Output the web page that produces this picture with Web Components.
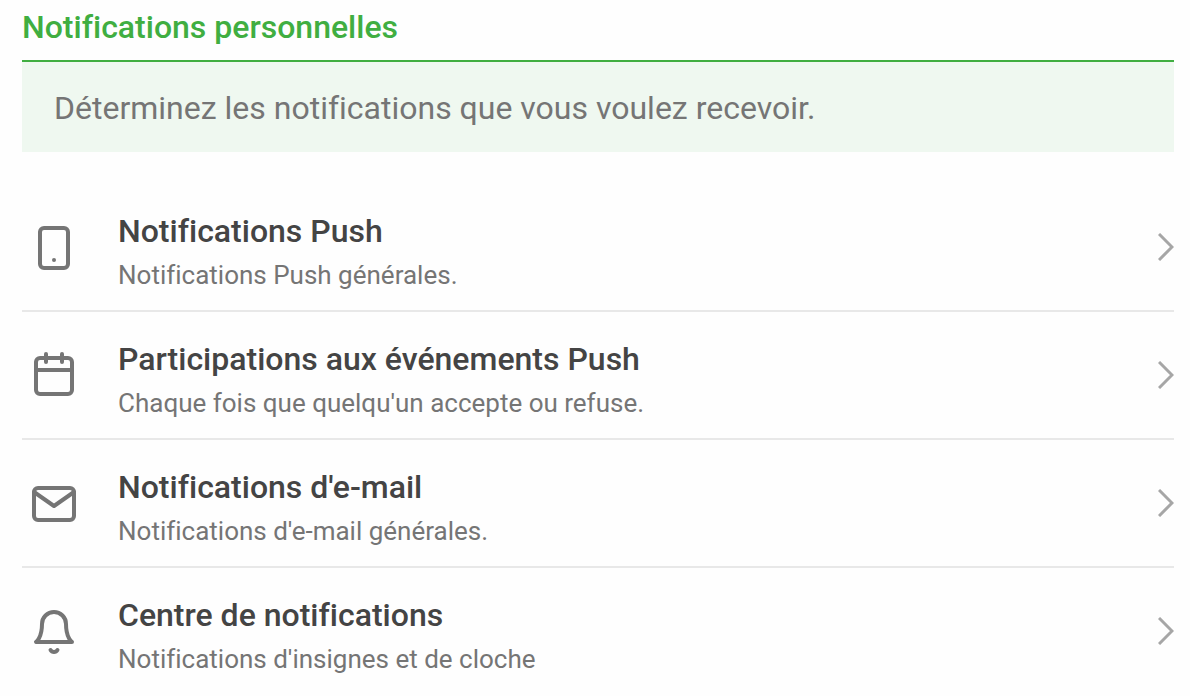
<!DOCTYPE html>
<html lang="fr">
<head>
<meta charset="utf-8">
<meta name="viewport" content="width=device-width, initial-scale=1">
<title>Notifications personnelles</title>
<style>
    body {
        margin: 0;
        background-color: #FEFEFE;
        color: #757575;
        font-family: Roboto, "Open Sans", sans-serif;
        font-variant-ligatures: none;
    }
</style>
</head>
<body>
<settings-section>
    <span slot="heading">Notifications personnelles</span>
    <span slot="intro">Déterminez les notifications que vous voulez recevoir.</span>
    <setting-row icon="phone" href="#push">
        <span slot="title">Notifications Push</span>
        <span slot="detail">Notifications Push générales.</span>
    </setting-row>
    <setting-row icon="calendar" href="#participations">
        <span slot="title">Participations aux événements Push</span>
        <span slot="detail">Chaque fois que quelqu'un accepte ou refuse.</span>
    </setting-row>
    <setting-row icon="mail" href="#email">
        <span slot="title">Notifications d'e-mail</span>
        <span slot="detail">Notifications d'e-mail générales.</span>
    </setting-row>
    <setting-row icon="bell" href="#centre">
        <span slot="title">Centre de notifications</span>
        <span slot="detail">Notifications d'insignes et de cloche</span>
    </setting-row>
</settings-section>

<script>
const ICONS = {
    phone: `<rect x="5" y="2" width="14" height="20" rx="2"/><path d="M12 18h.01"/>`,
    calendar: `<rect x="3" y="3" width="18" height="18" rx="2"/><path d="M16 1v4M8 1v4M3 9h18"/>`,
    mail: `<rect x="2" y="4" width="20" height="16" rx="2"/><path d="M22 6l-10 7L2 6"/>`,
    bell: `<path d="M18 8A6 6 0 0 0 6 8c0 7-3 9-3 9h18s-3-2-3-9"/><path d="M13.73 21a2 2 0 0 1-3.46 0"/>`
};

const iconTemplate = document.createElement("template");
iconTemplate.innerHTML = `
    <style>
        :host {
            display: block;
            flex: none;
        }

        svg {
            display: block;
            width: 48px;
            height: 48px;

            fill: none;
            stroke: currentColor;
            stroke-width: 2;
            stroke-linecap: round;
            stroke-linejoin: round;
        }
    </style>
    <svg id="i_svg" viewBox="0 0 24 24" aria-hidden="true"></svg>
`;

class LineIcon extends HTMLElement {
    static observedAttributes = ["name"];

    constructor() {
        super();
        this.attachShadow({mode: "open"});
        this.shadowRoot.append(iconTemplate.content.cloneNode(true));
        this.svg = this.shadowRoot.getElementById("i_svg");
    }

    attributeChangedCallback(_attribute, _oldValue, newValue) {
        this.svg.innerHTML = ICONS[newValue] || "";
    }
}

const rowTemplate = document.createElement("template");
rowTemplate.innerHTML = `
    <style>
        :host {
            display: block;
            border-bottom: 2px solid #E8E8E8;
        }

        :host(:last-of-type) {
            border-bottom-color: transparent;
        }

        .row {
            display: flex;
            align-items: center;
            gap: 40px;
            padding-left: 8px;

            color: inherit;
            text-decoration: none;
        }

        .row:hover {
            background-color: #F7FBF7;
        }

        .icon {
            padding-top: 2px;
        }

        .text {
            flex: 1;
            min-width: 0;
            padding: 25px 0 13px;
        }

        .title,
        .detail {
            display: block;
            line-height: 44px;
        }

        .title {
            color: #444444;
            font-size: 32px;
            font-weight: 500;
        }

        .detail {
            font-size: 26px;
        }

        .chevron {
            flex: none;
            width: 16px;
            height: 28px;

            fill: none;
            stroke: #A6A6A6;
            stroke-width: 3;
        }
    </style>
    <a id="r_link" class="row">
        <line-icon id="r_icon" class="icon"></line-icon>
        <span class="text">
            <span class="title"><slot name="title"></slot></span>
            <span class="detail"><slot name="detail"></slot></span>
        </span>
        <svg class="chevron" viewBox="0 0 16 28" aria-hidden="true"><path d="M1 1l13 13L1 27"/></svg>
    </a>
`;

class SettingRow extends HTMLElement {
    static observedAttributes = ["icon", "href"];

    constructor() {
        super();
        this.attachShadow({mode: "open"});
        this.shadowRoot.append(rowTemplate.content.cloneNode(true));
        this.link = this.shadowRoot.getElementById("r_link");
        this.icon = this.shadowRoot.getElementById("r_icon");
    }

    attributeChangedCallback(attribute, _oldValue, newValue) {
        switch(attribute) {
            case "icon":
                this.icon.setAttribute("name", newValue);
                break;
            case "href":
                this.link.setAttribute("href", newValue);
                break;
        }
    }
}

const sectionTemplate = document.createElement("template");
sectionTemplate.innerHTML = `
    <style>
        :host {
            --accent: #40AE41;

            display: block;
            padding: 0 16px 0 22px;
        }

        .heading {
            margin: 0;
            padding: 5px 0 11px;
            border-bottom: 2px solid var(--accent);

            color: var(--accent);
            font-size: 32px;
            font-weight: 500;
            line-height: 44px;
        }

        .intro {
            margin: 0 0 32px;
            padding: 24px 32px 22px;

            background-color: #EFF8F0;
            font-size: 32px;
            line-height: 44px;
        }
    </style>
    <h1 class="heading"><slot name="heading"></slot></h1>
    <p class="intro"><slot name="intro"></slot></p>
    <slot></slot>
`;

class SettingsSection extends HTMLElement {
    constructor() {
        super();
        this.attachShadow({mode: "open"});
        this.shadowRoot.append(sectionTemplate.content.cloneNode(true));
    }
}

customElements.define("line-icon", LineIcon);
customElements.define("setting-row", SettingRow);
customElements.define("settings-section", SettingsSection);
</script>
</body>
</html>
